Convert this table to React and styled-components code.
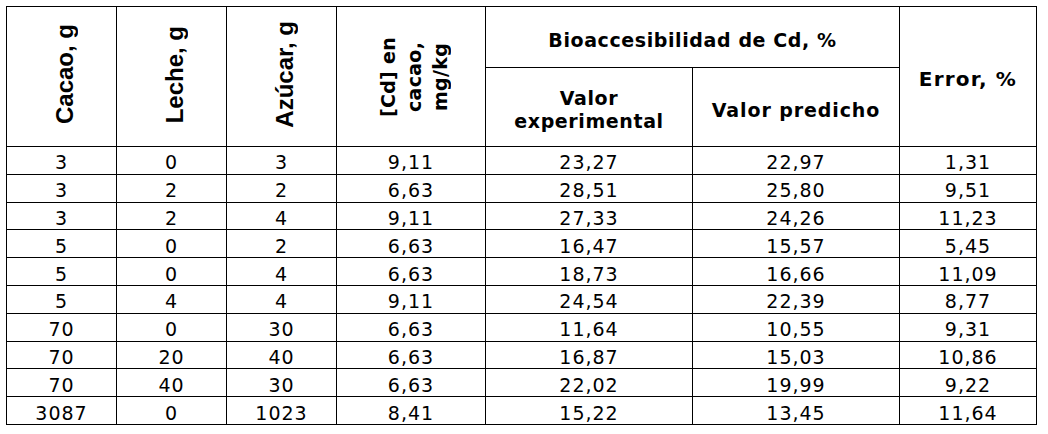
import styled, { createGlobalStyle } from "styled-components";

const GlobalStyle = createGlobalStyle`
  body {
    margin: 0;
    background: #ffffff;
    color: #000000;
  }
`;

const rows = [
  ["3", "0", "3", "9,11", "23,27", "22,97", "1,31"],
  ["3", "2", "2", "6,63", "28,51", "25,80", "9,51"],
  ["3", "2", "4", "9,11", "27,33", "24,26", "11,23"],
  ["5", "0", "2", "6,63", "16,47", "15,57", "5,45"],
  ["5", "0", "4", "6,63", "18,73", "16,66", "11,09"],
  ["5", "4", "4", "9,11", "24,54", "22,39", "8,77"],
  ["70", "0", "30", "6,63", "11,64", "10,55", "9,31"],
  ["70", "20", "40", "6,63", "16,87", "15,03", "10,86"],
  ["70", "40", "30", "6,63", "22,02", "19,99", "9,22"],
  ["3087", "0", "1023", "8,41", "15,22", "13,45", "11,64"],
];

const widths = [110, 110, 110, 149, 207, 207, 137];

const App = () => {
  return (
    <>
      <GlobalStyle />
      <Table>
        <colgroup>
          {widths.map((w, i) => (
            <Col key={i} $w={w} />
          ))}
        </colgroup>
        <thead>
          <HeadRow $h={61}>
            <RotCell rowSpan={2}>
              <Vertical>Cacao, g</Vertical>
            </RotCell>
            <RotCell rowSpan={2}>
              <Vertical>Leche, g</Vertical>
            </RotCell>
            <RotCell rowSpan={2}>
              <Vertical>Azúcar, g</Vertical>
            </RotCell>
            <RotCell rowSpan={2}>
              <VerticalWide>
                [Cd] en
                <br />
                cacao,
                <br />
                mg/kg
              </VerticalWide>
            </RotCell>
            <HeadCell colSpan={2}>Bioaccesibilidad de Cd, %</HeadCell>
            <HeadCell rowSpan={2} $size={20} $ls={1.2}>
              Error, %
            </HeadCell>
          </HeadRow>
          <HeadRow $h={79}>
            <HeadCell>
              Valor
              <br />
              experimental
            </HeadCell>
            <HeadCell $ls={0.9}>Valor predicho</HeadCell>
          </HeadRow>
        </thead>
        <tbody>
          {rows.map((r, i) => (
            <DataRow key={i}>
              {r.map((v, j) => (
                <Cell key={j}>{v}</Cell>
              ))}
            </DataRow>
          ))}
        </tbody>
      </Table>
    </>
  );
};

export default App;

const Table = styled.table`
  border-collapse: collapse;
  table-layout: fixed;
  width: 1031px;
  margin: 6px 0 0 6px;
`;

const Col = styled.col`
  width: ${(p) => p.$w}px;
`;

const HeadRow = styled.tr`
  height: ${(p) => p.$h}px;
`;

const DataRow = styled.tr`
  height: 27.8px;
`;

const HeadCell = styled.th`
  border: 1px solid #000;
  padding: 6px 2px 0;
  text-align: center;
  vertical-align: middle;
  font-family: "DejaVu Sans", Verdana, sans-serif;
  font-weight: bold;
  font-size: ${(p) => p.$size || 19}px;
  letter-spacing: ${(p) => p.$ls ?? 0.6}px;
  line-height: 23px;
`;

const RotCell = styled.th`
  border: 1px solid #000;
  padding: 0 0 0 6px;
  text-align: center;
  vertical-align: middle;
`;

const Vertical = styled.div`
  display: inline-block;
  writing-mode: vertical-rl;
  transform: rotate(180deg);
  font-family: "Liberation Sans", Arial, sans-serif;
  font-weight: bold;
  font-size: 24px;
  white-space: nowrap;
`;

const VerticalWide = styled.div`
  display: inline-block;
  writing-mode: vertical-rl;
  transform: rotate(180deg);
  text-align: center;
  font-family: "DejaVu Sans", Verdana, sans-serif;
  font-weight: bold;
  font-size: 19px;
  letter-spacing: 0.3px;
  line-height: 26px;
  white-space: nowrap;
  margin-top: 6px;
`;

const Cell = styled.td`
  border: 1px solid #000;
  padding: 5px 2px 0;
  text-align: center;
  vertical-align: middle;
  font-family: "DejaVu Sans", Verdana, sans-serif;
  font-size: 19px;
  letter-spacing: 1px;
  line-height: 21px;
`;
